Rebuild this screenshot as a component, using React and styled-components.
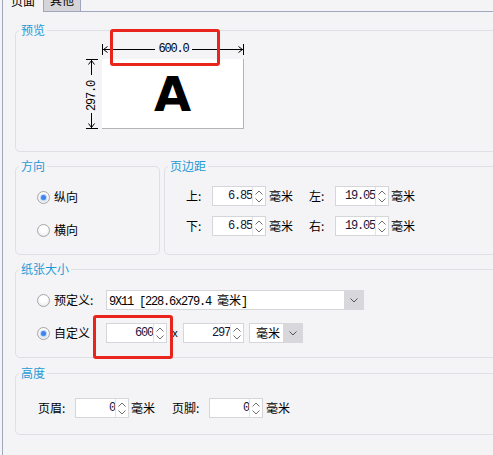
import React from 'react';
import styled, { createGlobalStyle } from 'styled-components';

const BG = '#f4f4f6';
const CJK = `"Noto Sans CJK SC", "Noto Sans", sans-serif`;
const MONO = `"Liberation Mono", "DejaVu Sans Mono", "Noto Sans CJK SC", monospace`;
const LINE = '#a0a7bd';

const Global = createGlobalStyle`
  html, body { margin: 0; padding: 0; background: ${BG}; }
  body { font-family: ${CJK}; font-size: 12px; color: #000; }
`;

const Root = styled.div`
  position: relative;
  width: 493px;
  height: 455px;
  overflow: hidden;
  background: ${BG};
  font-family: ${CJK};
  font-size: 12px;
  line-height: 14px;
`;

const TabBar = styled.div`
  display: flex;
  align-items: flex-end;
  height: 12px;
  padding-left: 2px;
`;

const Tab = styled.div`
  flex: none;
  box-sizing: border-box;
  width: ${(p) => p.$w}px;
  height: 23px;
  display: flex;
  align-items: center;
  justify-content: center;
  background: ${(p) => (p.$active ? BG : '#d5d5d9')};
  border-left: 1px solid ${LINE};
  border-right: ${(p) => (p.$active ? 'none' : `1px solid ${LINE}`)};
  border-bottom: ${(p) => (p.$active ? 'none' : `1px solid ${LINE}`)};
`;

const TabFiller = styled.div`
  flex: 1;
  box-sizing: border-box;
  height: 12px;
  border-bottom: 1px solid ${LINE};
`;

const Panel = styled.div`
  box-sizing: border-box;
  width: 520px;
  height: 443px;
  margin-left: 2px;
  border-left: 1px solid ${LINE};
  padding: 18px 0 0 12px;
  display: flex;
  flex-direction: column;
  gap: 14px;
`;

const Group = styled.div`
  flex: none;
  box-sizing: border-box;
  width: ${(p) => p.$w || 490}px;
  height: ${(p) => p.$h}px;
  margin-top: ${(p) => p.$mt || 0}px;
  border: 1px solid #dfe0e5;
  border-radius: 5px;
`;

const Legend = styled.div`
  position: relative;
  width: fit-content;
  height: 14px;
  margin: -8px 0 -6px 3px;
  padding: 0 2px;
  background: ${BG};
  color: #1f9ad6;
  line-height: 14px;
`;

const GroupRow = styled.div`
  display: flex;
  gap: 4px;
`;

/* ---------- preview ---------- */

const PreviewGrid = styled.div`
  display: grid;
  grid-template-columns: 12px 142px;
  grid-template-rows: 11px 70px;
  column-gap: 4px;
  row-gap: 4px;
  padding: 13px 0 0 70px;
`;

const HRuler = styled.div`
  display: flex;
  align-items: center;
  height: 11px;
`;

const HLine = styled.div`
  flex: 1;
  height: 1px;
  background: #000;
`;

const RulerText = styled.span`
  font-family: ${MONO};
  font-size: 12px;
  letter-spacing: -1.2px;
  line-height: 11px;
  margin: 0 3px 0 4px;
`;

const VRuler = styled.div`
  display: flex;
  flex-direction: column;
  align-items: center;
  height: 70px;
`;

const VLine = styled.div`
  flex: 1;
  width: 1px;
  align-self: flex-start;
  margin-left: 5px;
  background: #000;
`;

const VText = styled.span`
  writing-mode: vertical-rl;
  transform: rotate(180deg);
  font-family: ${MONO};
  font-size: 12px;
  letter-spacing: -1.2px;
  line-height: 12px;
  margin: 6px 0 2px;
`;

const Page = styled.div`
  box-sizing: border-box;
  background: #fff;
  border-right: 1px solid #b4b4b4;
  border-bottom: 1px solid #b4b4b4;
  display: flex;
  align-items: center;
  justify-content: center;
  font-family: "DejaVu Sans", "Liberation Sans", sans-serif;
  font-weight: bold;
  font-size: 48px;
  line-height: 1;
`;

const HEnd = ({ right }) => (
  <svg width="7" height="11" viewBox="0 0 7 11" style={{ flex: 'none', transform: right ? 'scaleX(-1)' : undefined }}>
    <line x1="0.5" y1="0" x2="0.5" y2="11" stroke="#000" strokeWidth="1" />
    <polyline points="5.5,2.5 1.5,5.5 5.5,8.5" fill="none" stroke="#000" strokeWidth="1" />
    <line x1="1" y1="5.5" x2="7" y2="5.5" stroke="#000" strokeWidth="1" />
  </svg>
);

const VEnd = ({ bottom }) => (
  <svg width="12" height="7" viewBox="0 0 12 7" style={{ flex: 'none', transform: bottom ? 'scaleY(-1)' : undefined }}>
    <line x1="0" y1="0.5" x2="12" y2="0.5" stroke="#000" strokeWidth="1" />
    <polyline points="2.5,5.5 5.5,1.5 8.5,5.5" fill="none" stroke="#000" strokeWidth="1" />
    <line x1="5.5" y1="1" x2="5.5" y2="7" stroke="#000" strokeWidth="1" />
  </svg>
);

/* ---------- radios ---------- */

const RadioList = styled.div`
  display: flex;
  flex-direction: column;
  gap: ${(p) => p.$gap}px;
  padding: ${(p) => p.$pt}px 0 0 21px;
`;

const RadioItem = styled.div`
  display: flex;
  align-items: center;
  height: ${(p) => p.$h || 14}px;
`;

const Radio = styled.span`
  flex: none;
  box-sizing: border-box;
  width: 13px;
  height: 13px;
  margin-right: 4px;
  border-radius: 50%;
  border: 1px solid #a6a6a6;
  background: radial-gradient(circle at 50% 35%, #ffffff 35%, #e2e2e2 100%);
  display: flex;
  align-items: center;
  justify-content: center;
  &::after {
    content: '';
    width: 5px;
    height: 5px;
    border-radius: 50%;
    background: ${(p) => (p.$checked ? '#3f84ec' : 'transparent')};
    box-shadow: ${(p) => (p.$checked ? '0 0 1px 1px rgba(90,150,240,0.45)' : 'none')};
  }
`;

const RadioLabel = styled.span`
  width: ${(p) => p.$w}px;
  flex: none;
`;

/* ---------- fields ---------- */

const FieldRows = styled.div`
  display: flex;
  flex-direction: column;
  gap: ${(p) => p.$gap}px;
  padding: ${(p) => p.$pt}px 0 0 ${(p) => p.$pl}px;
`;

const FieldRow = styled.div`
  display: flex;
  align-items: center;
  height: 20px;
`;

const FieldLabel = styled.span`
  flex: none;
  width: ${(p) => p.$w}px;
  margin-left: ${(p) => p.$ml || 0}px;
`;

const Unit = styled.span`
  flex: none;
  margin-left: ${(p) => p.$ml || 0}px;
`;

const SpinFrame = styled.div`
  flex: none;
  display: flex;
  box-sizing: border-box;
  height: 20px;
  border: 1px solid #d5d6da;
  background: #fff;
`;

const SpinText = styled.div`
  box-sizing: border-box;
  width: ${(p) => p.$w}px;
  padding-right: 0;
  text-align: right;
  font-family: ${MONO};
  font-size: 12px;
  letter-spacing: -1.2px;
  line-height: 18px;
  color: #16163a;
`;

const SpinButtons = styled.div`
  width: 12px;
  border-left: 1px solid #e2e3e7;
  display: flex;
  flex-direction: column;
  align-items: center;
  justify-content: space-around;
  padding: 1px 0;
`;

const Chevron = ({ up, color = '#6e6e6e' }) => (
  <svg width="8" height="5" viewBox="0 0 8 5">
    <polyline
      points={up ? '0.5,4.5 4,1 7.5,4.5' : '0.5,0.5 4,4 7.5,0.5'}
      fill="none"
      stroke={color}
      strokeWidth="1"
    />
  </svg>
);

const Spin = ({ value, w }) => (
  <SpinFrame>
    <SpinText $w={w}>{value}</SpinText>
    <SpinButtons>
      <Chevron up />
      <Chevron />
    </SpinButtons>
  </SpinFrame>
);

const Select = styled.div`
  flex: none;
  display: flex;
  height: 20px;
  margin-left: ${(p) => p.$ml || 0}px;
`;

const SelectValue = styled.div`
  box-sizing: border-box;
  width: ${(p) => p.$w}px;
  padding-left: ${(p) => p.$pl}px;
  border: 1px solid #d5d6da;
  border-right: none;
  background: #fff;
  line-height: 18px;
  font-family: ${(p) => (p.$mono ? MONO : CJK)};
  letter-spacing: ${(p) => (p.$mono ? '-1.2px' : '0')};
  white-space: nowrap;
  overflow: hidden;
`;

const Wide = styled.span`
  font-family: ${CJK};
  letter-spacing: 0;
`;

const SelectButton = styled.div`
  width: 20px;
  background: #d8d8dc;
  display: flex;
  align-items: center;
  justify-content: center;
`;

const Times = styled.span`
  flex: none;
  width: 16px;
  text-align: center;
  font-family: "Liberation Sans", sans-serif;
  font-size: 11px;
`;

const Callout = styled.div`
  position: absolute;
  left: ${(p) => p.$x}px;
  top: ${(p) => p.$y}px;
  width: ${(p) => p.$w}px;
  height: ${(p) => p.$h}px;
  box-sizing: border-box;
  border: 3px solid #e8241c;
  border-radius: 3px;
  pointer-events: none;
`;

export default function App() {
  return (
    <>
      <Global />
      <Root>
        <TabBar>
          <Tab $active $w={41}>页面</Tab>
          <Tab $w={38}>其他</Tab>
          <TabFiller />
        </TabBar>
        <Panel>
          <Group $h={122}>
            <Legend>预览</Legend>
            <PreviewGrid>
              <span />
              <HRuler>
                <HEnd />
                <HLine />
                <RulerText>600.0</RulerText>
                <HLine />
                <HEnd right />
              </HRuler>
              <VRuler>
                <VEnd />
                <VLine />
                <VText>297.0</VText>
                <VLine />
                <VEnd bottom />
              </VRuler>
              <Page>A</Page>
            </PreviewGrid>
          </Group>

          <GroupRow>
            <Group $h={89} $w={145}>
              <Legend>方向</Legend>
              <RadioList $pt={23} $gap={19}>
                <RadioItem>
                  <Radio $checked />
                  纵向
                </RadioItem>
                <RadioItem>
                  <Radio />
                  横向
                </RadioItem>
              </RadioList>
            </Group>
            <Group $h={89} $w={340}>
              <Legend>页边距</Legend>
              <FieldRows $pt={19} $pl={21} $gap={10}>
                <FieldRow>
                  <FieldLabel $w={26}>上:</FieldLabel>
                  <Spin value="6.85" w={39} />
                  <Unit $ml={3}>毫米</Unit>
                  <FieldLabel $w={26} $ml={16}>左:</FieldLabel>
                  <Spin value="19.05" w={39} />
                  <Unit $ml={2}>毫米</Unit>
                </FieldRow>
                <FieldRow>
                  <FieldLabel $w={26}>下:</FieldLabel>
                  <Spin value="6.85" w={39} />
                  <Unit $ml={3}>毫米</Unit>
                  <FieldLabel $w={26} $ml={16}>右:</FieldLabel>
                  <Spin value="19.05" w={39} />
                  <Unit $ml={2}>毫米</Unit>
                </FieldRow>
              </FieldRows>
            </Group>
          </GroupRow>

          <Group $h={89}>
            <Legend>纸张大小</Legend>
            <RadioList $pt={20} $gap={13}>
              <RadioItem $h={20}>
                <Radio />
                <RadioLabel $w={52}>预定义:</RadioLabel>
                <Select>
                  <SelectValue $w={238} $pl={2} $mono>
                    9X11 [228.6x279.4 <Wide>毫米</Wide>]
                  </SelectValue>
                  <SelectButton>
                    <Chevron color="#555" />
                  </SelectButton>
                </Select>
              </RadioItem>
              <RadioItem $h={20}>
                <Radio $checked />
                <RadioLabel $w={52}>自定义</RadioLabel>
                <Spin value="600" w={46} />
                <Times>x</Times>
                <Spin value="297" w={46} />
                <Select $ml={5}>
                  <SelectValue $w={34} $pl={6}>毫米</SelectValue>
                  <SelectButton>
                    <Chevron color="#555" />
                  </SelectButton>
                </Select>
              </RadioItem>
            </RadioList>
          </Group>

          <Group $h={62} $mt={1}>
            <Legend>高度</Legend>
            <FieldRows $pt={24} $pl={22} $gap={0}>
              <FieldRow>
                <FieldLabel $w={37}>页眉:</FieldLabel>
                <Spin value="0" w={39} />
                <Unit $ml={2}>毫米</Unit>
                <FieldLabel $w={37} $ml={17}>页脚:</FieldLabel>
                <Spin value="0" w={39} />
                <Unit $ml={3}>毫米</Unit>
              </FieldRow>
            </FieldRows>
          </Group>
        </Panel>

        <Callout $x={110} $y={29} $w={110} $h={37} />
        <Callout $x={93} $y={315} $w={80} $h={44} />
      </Root>
    </>
  );
}
